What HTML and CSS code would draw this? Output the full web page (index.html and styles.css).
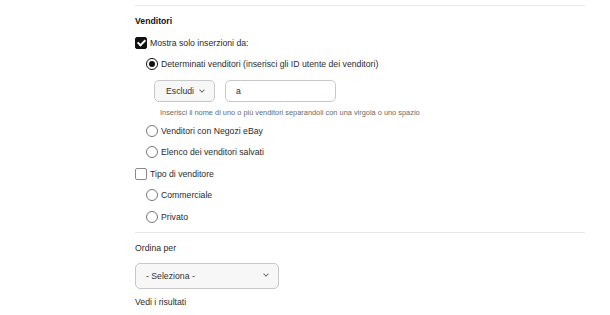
FILE: index.html
```html
<!DOCTYPE html>
<html lang="it">
<head>
  <meta charset="UTF-8" />
  <title>Filtri - Venditori</title>
  <link rel="stylesheet" href="styles.css">
</head>
<body>
  <div class="pannello">
    <div class="linea"></div>

    <div class="sezione">
      <div class="titolo">Venditori</div>

      <div class="riga">
        <span class="casella attiva"></span>
        <span>Mostra solo inserzioni da:</span>
      </div>

      <div class="riga rientro">
        <span class="tondo attivo"></span>
        <span>Determinati venditori (inserisci gli ID utente dei venditori)</span>
      </div>

      <div class="campi">
        <div class="scelta">Escludi <span class="freccia"></span></div>
        <div class="testo">a</div>
      </div>
      <div class="aiuto">Inserisci il nome di uno o più venditori separandoli con una virgola o uno spazio</div>

      <div class="riga rientro">
        <span class="tondo"></span>
        <span>Venditori con Negozi eBay</span>
      </div>
      <div class="riga rientro">
        <span class="tondo"></span>
        <span>Elenco dei venditori salvati</span>
      </div>

      <div class="riga">
        <span class="casella"></span>
        <span>Tipo di venditore</span>
      </div>
      <div class="riga rientro">
        <span class="tondo"></span>
        <span>Commerciale</span>
      </div>
      <div class="riga rientro">
        <span class="tondo"></span>
        <span>Privato</span>
      </div>
    </div>

    <div class="linea basso"></div>

    <div class="sezione">
      <div class="etichetta">Ordina per</div>
      <div class="menu">- Seleziona - <span class="freccia"></span></div>
      <div class="etichetta">Vedi i risultati</div>
    </div>
  </div>
</body>
</html>
```

FILE: styles.css
```css
body {
  margin: 0;
  font-family: "Liberation Sans", Arial, sans-serif;
  font-size: 8.7px;
  color: #2b2b2b;
  background: #fff;
}

.pannello {
  padding: 5px 25px 0 135px;
}

.linea {
  height: 1px;
  background: #e8e8e8;
}

.linea.basso {
  margin-top: 4px;
}

.sezione {
  padding-top: 8px;
}

.titolo {
  font-weight: bold;
  color: #111;
  line-height: 14px;
  margin-bottom: 4px;
}

.riga {
  display: flex;
  align-items: center;
  gap: 3px;
  height: 21.5px;
}

.rientro {
  padding-left: 11px;
}

.casella {
  width: 10px;
  height: 10px;
  border: 1px solid #8a8a8a;
  border-radius: 2px;
  position: relative;
}

.casella.attiva {
  background: #111;
  border-color: #111;
}

.casella.attiva::after {
  content: "";
  position: absolute;
  left: 3px;
  top: 0;
  width: 3px;
  height: 6px;
  border: solid #fff;
  border-width: 0 2px 2px 0;
  transform: rotate(45deg);
}

.tondo {
  width: 10px;
  height: 10px;
  border: 1px solid #777;
  border-radius: 50%;
  position: relative;
}

.tondo.attivo {
  border-color: #111;
}

.tondo.attivo::after {
  content: "";
  position: absolute;
  left: 2px;
  top: 2px;
  width: 6px;
  height: 6px;
  border-radius: 50%;
  background: #111;
}

.campi {
  display: flex;
  gap: 10px;
  margin: 5px 0 0 19px;
}

.scelta,
.menu {
  display: flex;
  align-items: center;
  justify-content: space-between;
  background: #f7f7f7;
  border: 1px solid #c8c8c8;
  border-radius: 5px;
  color: #333;
}

.scelta {
  width: 61px;
  height: 22px;
  padding: 0 10px 0 11px;
  box-sizing: border-box;
}

.testo {
  width: 111px;
  height: 22px;
  box-sizing: border-box;
  border: 1px solid #c8c8c8;
  border-radius: 5px;
  padding-left: 10px;
  display: flex;
  align-items: center;
}

.freccia {
  width: 3px;
  height: 3px;
  border: solid #777;
  border-width: 0 1px 1px 0;
  transform: rotate(45deg);
  margin-top: -3px;
}

.aiuto {
  font-size: 7.4px;
  color: #6a6a6a;
  margin: 5px 0 1px 25px;
  line-height: 12px;
}

.etichetta {
  line-height: 14px;
}

.menu {
  width: 144px;
  height: 26px;
  box-sizing: border-box;
  padding: 0 10px 0 10px;
  margin: 8px 0 6px;
}
```
